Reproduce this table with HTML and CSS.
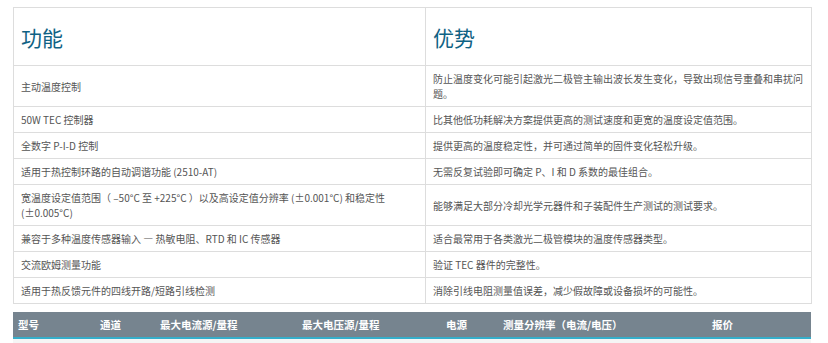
FILE: index.html
```html
<!DOCTYPE html>
<html lang="zh-CN">
<head>
<meta charset="utf-8">
<title>功能与优势</title>
<link rel="stylesheet" href="styles.css">
</head>
<body>
<div class="page">
  <table class="features">
    <colgroup><col class="c-left"><col class="c-right"></colgroup>
    <thead>
      <tr><th>功能</th><th>优势</th></tr>
    </thead>
    <tbody>
      <tr><td>主动温度控制</td><td>防止温度变化可能引起激光二极管主输出波长发生变化，导致出现信号重叠和串扰问题。</td></tr>
      <tr><td>50W TEC 控制器</td><td>比其他低功耗解决方案提供更高的测试速度和更宽的温度设定值范围。</td></tr>
      <tr><td>全数字 P-I-D 控制</td><td>提供更高的温度稳定性，并可通过简单的固件变化轻松升级。</td></tr>
      <tr><td>适用于热控制环路的自动调谐功能 (2510-AT)</td><td>无需反复试验即可确定 P、I 和 D 系数的最佳组合。</td></tr>
      <tr><td>宽温度设定值范围（ –50°C 至 +225°C ）以及高设定值分辨率 (±0.001°C) 和稳定性 (±0.005°C)</td><td>能够满足大部分冷却光学元器件和子装配件生产测试的测试要求。</td></tr>
      <tr><td>兼容于多种温度传感器输入 — 热敏电阻、RTD 和 IC 传感器</td><td>适合最常用于各类激光二极管模块的温度传感器类型。</td></tr>
      <tr><td>交流欧姆测量功能</td><td>验证 TEC 器件的完整性。</td></tr>
      <tr><td>适用于热反馈元件的四线开路/短路引线检测</td><td>消除引线电阻测量值误差，减少假故障或设备损坏的可能性。</td></tr>
    </tbody>
  </table>

  <table class="models">
    <colgroup>
      <col class="m1"><col class="m2"><col class="m3"><col class="m4"><col class="m5"><col class="m6"><col class="m7">
    </colgroup>
    <thead>
      <tr><th>型号</th><th>通道</th><th>最大电流源/量程</th><th>最大电压源/量程</th><th>电源</th><th>测量分辨率（电流/电压）</th><th>报价</th></tr>
    </thead>
    <tbody>
      <tr><td></td><td></td><td></td><td></td><td></td><td></td><td></td></tr>
    </tbody>
  </table>
</div>
</body>
</html>
```

FILE: styles.css
```css
html, body {
  margin: 0;
  padding: 0;
  background: #ffffff;
}

body {
  font-family: "Noto Sans CJK SC", "Open Sans", sans-serif;
  color: #555555;
}

.page {
  padding: 7px 0 0 13px;
  width: 798px;
}

table {
  border-collapse: collapse;
  width: 798px;
  table-layout: fixed;
}

.c-left { width: 412px; }
.c-right { width: 386px; }

.features th,
.features td {
  border: 1px solid #dddddd;
  text-align: left;
  vertical-align: middle;
}

.features th {
  height: 57px;
  padding: 0 7px;
  font-size: 21px;
  font-weight: 400;
  color: #0f6284;
  line-height: 24px;
}

.features td {
  font-size: 10px;
  line-height: 15px;
  padding: 5px 7px;
}

.models {
  margin-top: 8px;
}

.m1 { width: 82px; }
.m2 { width: 60px; }
.m3 { width: 142px; }
.m4 { width: 144px; }
.m5 { width: 57px; }
.m6 { width: 209px; }
.m7 { width: 104px; }

.models th {
  background: #76848f;
  color: #ffffff;
  font-size: 10.5px;
  font-weight: 700;
  text-align: left;
  height: 25px;
  padding: 0 5px;
  border-bottom: 2px solid #36aeca;
}

.models td {
  background: #f5f5f5;
  height: 20px;
}
```
